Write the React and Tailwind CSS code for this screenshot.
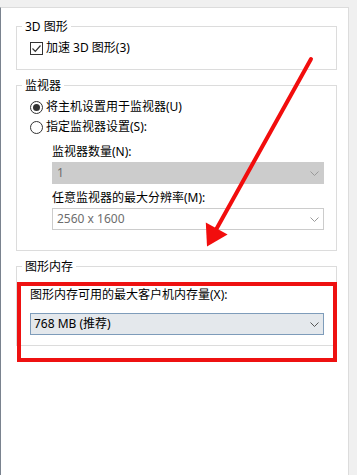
import React from "react";

const font = "font-['Noto_Sans','Noto_Sans_CJK_SC',sans-serif]";

function Chevron({ color = "#8a8a8a" }) {
  return (
    <svg width="9" height="5" viewBox="0 0 9 5" className="shrink-0">
      <path d="M0.5 0.5 L4.5 4.5 L8.5 0.5" fill="none" stroke={color} strokeWidth="1" />
    </svg>
  );
}

function Group({ title, className, children }) {
  return (
    <div className={`relative border border-[#dcdcdc] ${className}`}>
      <span className="absolute -top-[8px] left-[5px] bg-white px-[3px] leading-[16px] text-black">
        {title}
      </span>
      {children}
    </div>
  );
}

function Radio({ checked, label }) {
  return (
    <div className="flex h-[16px] items-center">
      <span className="flex h-[13px] w-[13px] items-center justify-center rounded-full border border-[#333333] bg-white">
        {checked && <span className="h-[7px] w-[7px] rounded-full bg-[#333333]" />}
      </span>
      <span className="ml-[3px] leading-[16px] text-black">{label}</span>
    </div>
  );
}

export default function App() {
  return (
    <div className={`relative flex h-[475px] w-[357px] overflow-hidden bg-[#f0f0f0] pt-[7px] text-[12px] ${font}`}>
      <div className="flex h-[468px] w-[349px] flex-col border-t border-r border-l border-t-[#dcdcdc] border-r-[#dcdcdc] border-l-[#7a838f] bg-white pl-[15px] pr-[11px]">
        {/* 3D 图形 */}
        <Group title="3D 图形" className="mt-[18px] h-[44px] pt-[13px] pl-[13px]">
          <div className="flex h-[16px] items-center">
            <span className="flex h-[13px] w-[13px] items-center justify-center border border-[#333333] bg-white">
              <svg width="11" height="11" viewBox="0 0 11 11">
                <path d="M1.5 5.5 L4.3 8.3 L9.5 2.5" fill="none" stroke="#333333" strokeWidth="1.2" />
              </svg>
            </span>
            <span className="ml-[3px] leading-[16px] text-black">加速 3D 图形(3)</span>
          </div>
        </Group>

        {/* 监视器 */}
        <Group title="监视器" className="mt-[15px] h-[166px] pt-[13px] pl-[13px] pr-[12px]">
          <div className="flex flex-col">
            <Radio checked label="将主机设置用于监视器(U)" />
            <div className="mt-[4px]">
              <Radio label="指定监视器设置(S):" />
            </div>
            <div className="ml-[22px] flex flex-col">
              <div className="mt-[9px] h-[16px] leading-[16px] text-black">监视器数量(N):</div>
              <div className="mt-[2px] flex h-[22px] items-center justify-between border border-[#cccccc] bg-[#cccccc] pl-[4px] pr-[4px]">
                <span className="leading-[16px] text-[#6d6d6d]">1</span>
                <Chevron color="#9a9a9a" />
              </div>
              <div className="mt-[6px] h-[16px] leading-[16px] text-black">任意监视器的最大分辨率(M):</div>
              <div className="mt-[2px] flex h-[22px] items-center justify-between border border-[#cccccc] bg-white pl-[4px] pr-[4px]">
                <span className="leading-[16px] text-[#6d6d6d]">2560 x 1600</span>
                <Chevron color="#9a9a9a" />
              </div>
            </div>
          </div>
        </Group>

        {/* 图形内存 */}
        <Group title="图形内存" className="mt-[15px] h-[80px] pt-[20px] pl-[13px] pr-[12px]">
          <div className="flex flex-col">
            <div className="h-[16px] leading-[16px] text-black">图形内存可用的最大客户机内存量(X):</div>
            <div className="mt-[10px] flex h-[22px] items-center justify-between border border-[#7e9cba] bg-[#e4e8ec] pl-[3px] pr-[4px]">
              <span className="leading-[16px] text-black">768 MB (推荐)</span>
              <Chevron color="#555555" />
            </div>
          </div>
        </Group>
      </div>

      {/* red highlight */}
      <div className="pointer-events-none absolute left-[17px] top-[282px] h-[80px] w-[320px] border-[4px] border-[#ee1111]" />

      {/* red arrow */}
      <svg className="pointer-events-none absolute left-0 top-0" width="357" height="475" viewBox="0 0 357 475">
        <line x1="311" y1="59" x2="216.7" y2="228.5" stroke="#f20d0d" strokeWidth="4" strokeLinecap="round" />
        <polygon points="205.8,222.4 227.6,234.6 207,246.5" fill="#f20d0d" />
      </svg>
    </div>
  );
}
